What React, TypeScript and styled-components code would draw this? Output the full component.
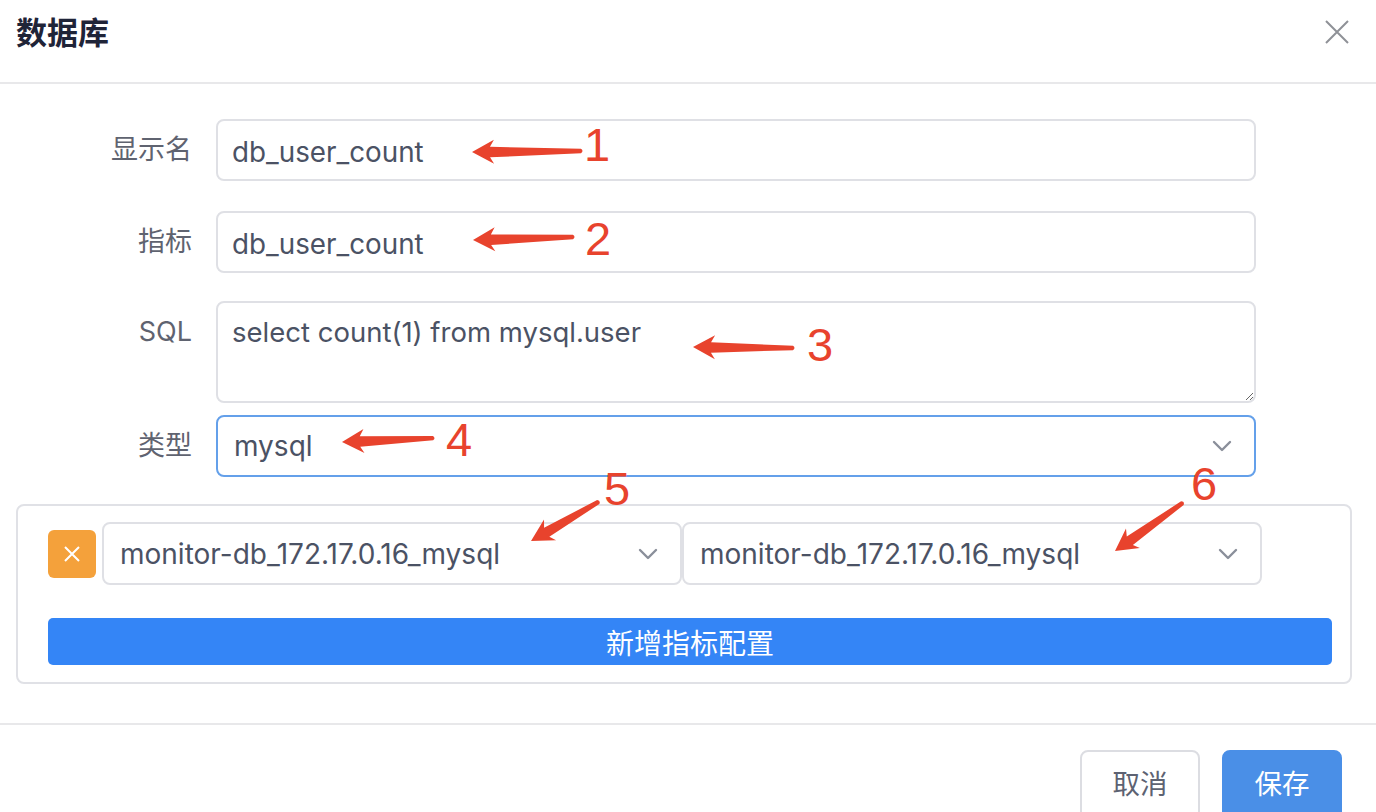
import React from "react";
import styled, { createGlobalStyle } from "styled-components";

const GlobalStyle = createGlobalStyle`
  html, body { margin: 0; padding: 0; background: #ffffff; }
  body { font-family: Inter, "Noto Sans CJK SC", sans-serif; }
  * { box-sizing: border-box; }
`;

const Page = styled.div`
  position: relative;
  width: 1376px;
  height: 812px;
  overflow: hidden;
  background: #ffffff;
`;

const Header = styled.header`
  height: 84px;
  display: flex;
  align-items: flex-start;
  justify-content: space-between;
  padding: 14px 26px 0 16px;
  border-bottom: 2px solid #e8e8ea;
`;

const Title = styled.h1`
  margin: 0;
  font-family: "Noto Sans CJK SC", sans-serif;
  font-size: 31px;
  line-height: 34px;
  font-weight: 700;
  color: #1f2438;
`;

const CloseButton = styled.button`
  border: none;
  background: none;
  padding: 0;
  margin-top: 5px;
  width: 26px;
  height: 26px;
  display: flex;
  align-items: center;
  justify-content: center;
  color: #8f9197;
`;

const Form = styled.div`
  padding-top: 35px;
`;

const FormItem = styled.div<{ $mb: number }>`
  display: grid;
  grid-template-columns: 192px 1040px;
  column-gap: 24px;
  margin-bottom: ${(p) => p.$mb}px;
`;

const Label = styled.label`
  text-align: right;
  font-family: Inter, "Noto Sans CJK SC", sans-serif;
  font-size: 27px;
  line-height: 62px;
  color: #5f6370;
`;

const TextInput = styled.input`
  width: 100%;
  height: 62px;
  border: 2px solid #dfe0e5;
  border-radius: 8px;
  padding: 3px 14px 0;
  font-family: Inter, "Noto Sans CJK SC", sans-serif;
  font-size: 27.8px;
  color: #4b5264;
  background: #fff;
  outline: none;
`;

const TextArea = styled.textarea`
  width: 100%;
  height: 102px;
  border: 2px solid #dfe0e5;
  border-radius: 8px;
  padding: 10px 14px;
  font-family: Inter, "Noto Sans CJK SC", sans-serif;
  font-size: 27.5px;
  line-height: 38px;
  color: #4b5264;
  background: #fff;
  outline: none;
  resize: vertical;
  display: block;
`;

const SelectBox = styled.div<{ $focused?: boolean; $width?: number }>`
  width: ${(p) => (p.$width ? `${p.$width}px` : "100%")};
  height: ${(p) => (p.$focused ? 62 : 63)}px;
  border: 2px solid ${(p) => (p.$focused ? "#64a0ea" : "#dfe0e5")};
  border-radius: 8px;
  padding: 0 22px 0 16px;
  display: flex;
  align-items: center;
  justify-content: space-between;
  font-family: Inter, "Noto Sans CJK SC", sans-serif;
  font-size: 28px;
  color: #4b5264;
  background: #fff;
  flex-shrink: 0;
`;

const Chevron = styled.svg`
  width: 20px;
  height: 12px;
  color: #8a8f9a;
`;

const ConfigBox = styled.section`
  margin: 27px 24px 0 16px;
  border: 2px solid #e0e1e6;
  border-radius: 8px;
  padding: 16px 18px 17px 30px;
`;

const ConfigRow = styled.div`
  display: flex;
  align-items: center;
`;

const RemoveButton = styled.button`
  width: 48px;
  height: 48px;
  margin-right: 6px;
  border: none;
  border-radius: 6px;
  background: #f4a13b;
  display: flex;
  align-items: center;
  justify-content: center;
  color: #fff;
  padding: 0;
  flex-shrink: 0;
`;

const AddButton = styled.button`
  width: 100%;
  height: 47px;
  margin-top: 33px;
  border: none;
  border-radius: 5px;
  background: #3485f6;
  color: #fff;
  font-family: "Noto Sans CJK SC", sans-serif;
  font-size: 28px;
  display: flex;
  align-items: center;
  justify-content: center;
`;

const Footer = styled.footer`
  margin-top: 39px;
  border-top: 2px solid #e8e8ea;
  padding: 25px 34px 0 0;
  display: flex;
  justify-content: flex-end;
  gap: 22px;
`;

const FooterButton = styled.button<{ $primary?: boolean }>`
  width: 120px;
  height: 70px;
  border-radius: 8px;
  border: 2px solid ${(p) => (p.$primary ? "#4a8fe7" : "#dcdde2")};
  background: ${(p) => (p.$primary ? "#4a8fe7" : "#fff")};
  color: ${(p) => (p.$primary ? "#fff" : "#5d6272")};
  font-family: "Noto Sans CJK SC", sans-serif;
  font-size: 27.5px;
  padding: 0 0 6px;
`;

const Overlay = styled.svg`
  position: absolute;
  left: 0;
  top: 0;
  width: 1376px;
  height: 812px;
  pointer-events: none;
`;

const Num = styled.span<{ $x: number; $y: number }>`
  position: absolute;
  left: ${(p) => p.$x}px;
  top: ${(p) => p.$y}px;
  font-family: "Liberation Sans", Arial, sans-serif;
  font-size: 47px;
  line-height: 47px;
  color: #e8432d;
  pointer-events: none;
`;

const ChevronIcon = () => (
  <Chevron viewBox="0 0 20 12" fill="none">
    <path d="M2 2 L10 10 L18 2" stroke="currentColor" strokeWidth="2.4" strokeLinecap="round" strokeLinejoin="round" />
  </Chevron>
);

type ArrowProps = { tip: [number, number]; tail: [number, number] };

const Arrow = ({ tip, tail }: ArrowProps) => {
  const dx = tail[0] - tip[0];
  const dy = tail[1] - tip[1];
  const len = Math.sqrt(dx * dx + dy * dy);
  const ang = (Math.atan2(dy, dx) * 180) / Math.PI;
  const d = `M0 0 L22 -12 L18 -5 L${len - 2} -2.2 Q${len + 1} 0 ${len - 2} 2.2 L18 5.5 L22 12 Z`;
  return <path d={d} fill="#e8432d" transform={`translate(${tip[0]} ${tip[1]}) rotate(${ang})`} />;
};

const arrows: ArrowProps[] = [
  { tip: [472, 152], tail: [583, 151] },
  { tip: [473, 240], tail: [575, 237] },
  { tip: [693, 347], tail: [795, 348] },
  { tip: [342, 442], tail: [435, 438] },
  { tip: [531, 541], tail: [600, 501] },
  { tip: [1115, 551], tail: [1184, 502] },
];

const nums = [
  { n: "1", x: 584, y: 121 },
  { n: "2", x: 585, y: 215 },
  { n: "3", x: 807, y: 321 },
  { n: "4", x: 446, y: 416 },
  { n: "5", x: 604, y: 465 },
  { n: "6", x: 1191, y: 460 },
];

export default function App() {
  return (
    <Page>
      <GlobalStyle />
      <Header>
        <Title>数据库</Title>
        <CloseButton aria-label="close">
          <svg width="26" height="26" viewBox="0 0 26 26" fill="none">
            <path d="M2 2 L24 24 M24 2 L2 24" stroke="currentColor" strokeWidth="2" />
          </svg>
        </CloseButton>
      </Header>
      <Form>
        <FormItem $mb={30}>
          <Label>显示名</Label>
          <TextInput readOnly defaultValue="db_user_count" />
        </FormItem>
        <FormItem $mb={28}>
          <Label>指标</Label>
          <TextInput readOnly defaultValue="db_user_count" />
        </FormItem>
        <FormItem $mb={12}>
          <Label>SQL</Label>
          <TextArea readOnly defaultValue="select count(1) from mysql.user" />
        </FormItem>
        <FormItem $mb={0}>
          <Label>类型</Label>
          <SelectBox $focused>
            <span>mysql</span>
            <ChevronIcon />
          </SelectBox>
        </FormItem>
      </Form>
      <ConfigBox>
        <ConfigRow>
          <RemoveButton aria-label="remove">
            <svg width="18" height="18" viewBox="0 0 18 18" fill="none">
              <path d="M2 2 L16 16 M16 2 L2 16" stroke="currentColor" strokeWidth="2" />
            </svg>
          </RemoveButton>
          <SelectBox $width={580}>
            <span>monitor-db_172.17.0.16_mysql</span>
            <ChevronIcon />
          </SelectBox>
          <SelectBox $width={580}>
            <span>monitor-db_172.17.0.16_mysql</span>
            <ChevronIcon />
          </SelectBox>
        </ConfigRow>
        <AddButton>新增指标配置</AddButton>
      </ConfigBox>
      <Footer>
        <FooterButton>取消</FooterButton>
        <FooterButton $primary>保存</FooterButton>
      </Footer>
      <Overlay viewBox="0 0 1376 812">
        {arrows.map((a, i) => (
          <Arrow key={i} {...a} />
        ))}
      </Overlay>
      {nums.map((n) => (
        <Num key={n.n} $x={n.x} $y={n.y}>
          {n.n}
        </Num>
      ))}
    </Page>
  );
}
